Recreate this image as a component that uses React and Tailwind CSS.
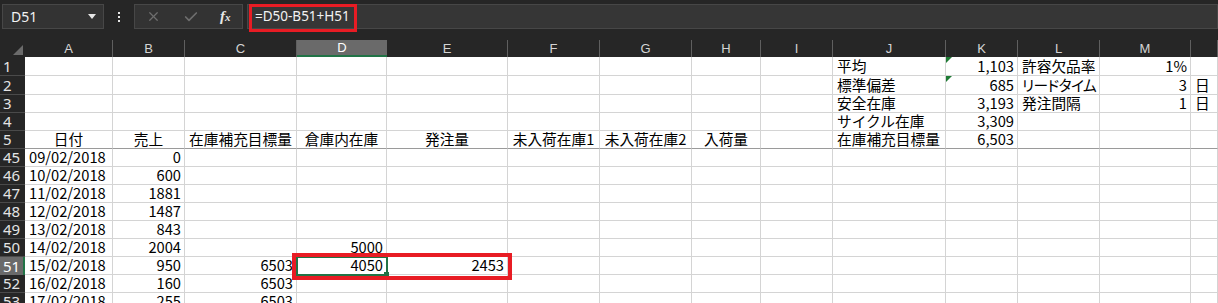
// Excel-style sheet view: formula bar on top, frozen header rows, and
// the inventory columns with the D51:E51 range highlighted in red.
import { X, Check } from "lucide-react";

const GRID =
  "grid grid-cols-[25px_88px_72px_112px_90px_121px_92px_92px_69px_72px_113px_72px_82px_91px_1fr]";

const LETTERS = ["A", "B", "C", "D", "E", "F", "G", "H", "I", "J", "K", "L", "M", ""];

// cells: column index -> [text, align]
const rows = [
  { n: "1", h: "h-[19px]", cells: { 9: ["平均", "l"], 10: ["1,103", "r"], 11: ["許容欠品率", "l"], 12: ["1%", "r"] }, flags: [10] },
  { n: "2", h: "h-[19px]", cells: { 9: ["標準偏差", "l"], 10: ["685", "r"], 11: ["リードタイム", "p"], 12: ["3", "r"], 13: ["日", "l"] }, flags: [10] },
  { n: "3", h: "h-[18px]", cells: { 9: ["安全在庫", "l"], 10: ["3,193", "r"], 11: ["発注間隔", "l"], 12: ["1", "r"], 13: ["日", "l"] } },
  { n: "4", h: "h-[18px]", cells: { 9: ["サイクル在庫", "l"], 10: ["3,309", "r"] } },
  {
    n: "5",
    h: "h-[18px]",
    freeze: true,
    cells: {
      0: ["日付", "c"],
      1: ["売上", "c"],
      2: ["在庫補充目標量", "c"],
      3: ["倉庫内在庫", "c"],
      4: ["発注量", "c"],
      5: ["未入荷在庫1", "c"],
      6: ["未入荷在庫2", "c"],
      7: ["入荷量", "c"],
      9: ["在庫補充目標量", "l"],
      10: ["6,503", "r"],
    },
  },
  { n: "45", h: "h-[18px]", cells: { 0: ["09/02/2018", "l"], 1: ["0", "r"] } },
  { n: "46", h: "h-[18px]", cells: { 0: ["10/02/2018", "l"], 1: ["600", "r"] } },
  { n: "47", h: "h-[18px]", cells: { 0: ["11/02/2018", "l"], 1: ["1881", "r"] } },
  { n: "48", h: "h-[18px]", cells: { 0: ["12/02/2018", "l"], 1: ["1487", "r"] } },
  { n: "49", h: "h-[18px]", cells: { 0: ["13/02/2018", "l"], 1: ["843", "r"] } },
  { n: "50", h: "h-[18px]", cells: { 0: ["14/02/2018", "l"], 1: ["2004", "r"], 3: ["5000", "r"] } },
  { n: "51", h: "h-[18px]", active: true, cells: { 0: ["15/02/2018", "l"], 1: ["950", "r"], 2: ["6503", "r"], 3: ["4050", "r"], 4: ["2453", "r"] } },
  { n: "52", h: "h-[18px]", cells: { 0: ["16/02/2018", "l"], 1: ["160", "r"], 2: ["6503", "r"] } },
  { n: "53", h: "h-[18px]", cells: { 0: ["17/02/2018", "l"], 1: ["255", "r"], 2: ["6503", "r"] } },
];

// "p" = left aligned with proportional kana, so リードタイム fits like in Excel
const alignClass = {
  l: "justify-start pl-[4px]",
  p: "justify-start pl-[4px] [font-feature-settings:'palt'] tracking-[-0.5px]",
  r: "justify-end pr-[3px]",
  c: "justify-center",
};

function Toolbar() {
  return (
    <div className="relative flex h-[40px] items-start bg-[#262626] pt-[4px]">
      <div className="ml-[2px] flex h-[25px] w-[102px] items-center justify-between border border-[#474747] bg-[#333333] pl-[8px] pr-[7px]">
        <span className="font-['Noto_Sans',sans-serif] text-[14px] text-[#f2f2f2]">D51</span>
        <svg width="8" height="5" viewBox="0 0 8 5">
          <polygon points="0,0 8,0 4,5" fill="#e6e6e6" />
        </svg>
      </div>
      <div className="flex h-[25px] w-[30px] flex-col items-center justify-center gap-[2px]">
        <span className="h-[2px] w-[2px] bg-[#e6e6e6]" />
        <span className="h-[2px] w-[2px] bg-[#e6e6e6]" />
        <span className="h-[2px] w-[2px] bg-[#e6e6e6]" />
      </div>
      <div className="flex h-[25px] w-[109px] items-center border border-[#474747] bg-[#333333]">
        <X size={15} strokeWidth={2} className="ml-[11px] text-[#6e6e6e]" />
        <Check size={16} strokeWidth={2.5} className="ml-[22px] text-[#6e6e6e]" />
        <span className="ml-[21px] font-['Liberation_Serif',serif] text-[15px] font-bold italic leading-none text-[#e8e8e8]">
          f<span className="text-[11px]">x</span>
        </span>
      </div>
      <div className="ml-[4px] flex h-[25px] flex-1 items-center border border-[#474747] bg-[#363636] pl-[7px]">
        <span className="font-['Noto_Sans',sans-serif] text-[13.5px] text-[#f2f2f2]">=D50-B51+H51</span>
      </div>
      <div className="pointer-events-none absolute left-[249px] top-[4px] h-[28px] w-[108px] border-[3px] border-[#e81c24]" />
    </div>
  );
}

function HeaderRow() {
  return (
    <div className={`${GRID} h-[17px] bg-[#262626]`}>
      <div className="flex items-end justify-end pb-[2px] pr-[2px]">
        <svg width="10" height="10" viewBox="0 0 10 10">
          <polygon points="10,0 10,10 0,10" fill="#6b6b6b" />
        </svg>
      </div>
      {LETTERS.map((l, i) =>
        i === 3 ? (
          <div
            key={i}
            className="flex items-center justify-center border-b-2 border-b-[#217346] bg-[#6a6a6a] font-['Liberation_Sans',sans-serif] text-[13px] leading-none text-white"
          >
            {l}
          </div>
        ) : (
          <div
            key={i}
            className="flex items-center justify-center border-r border-[#5f5f5f] font-['Liberation_Sans',sans-serif] text-[13px] leading-none text-[#d4d4d4]"
          >
            {l}
          </div>
        )
      )}
    </div>
  );
}

function Row({ row }) {
  const lineColor = row.freeze ? "border-b-[#9a9a9a]" : "border-b-[#d4d4d4]";
  return (
    <div className={`${GRID} ${row.h}`}>
      <div
        className={`flex items-center pl-[3px] font-['Noto_Sans',sans-serif] text-[15px] leading-none ${
          row.active
            ? "border-r-2 border-r-[#217346] bg-[#6a6a6a] text-white"
            : "border-b border-b-[#4a4a4a] bg-[#262626] text-[#e4e4e4]"
        }`}
      >
        {row.n}
      </div>
      {LETTERS.map((_, i) => {
        const cell = row.cells[i];
        const flagged = row.flags && row.flags.includes(i);
        return (
          <div
            key={i}
            className={`relative flex items-end whitespace-nowrap border-b border-r border-r-[#d4d4d4] bg-white pb-[1px] font-['Noto_Sans_CJK_JP',sans-serif] text-[14.7px] leading-[16px] text-black ${lineColor} ${
              cell ? alignClass[cell[1]] : ""
            }`}
          >
            {flagged && (
              <svg width="6" height="6" viewBox="0 0 6 6" className="absolute left-0 top-0">
                <polygon points="0,0 6,0 0,6" fill="#1e7b34" />
              </svg>
            )}
            {cell ? cell[0] : null}
          </div>
        );
      })}
    </div>
  );
}

export default function App() {
  return (
    <div className="relative h-[303px] w-[1218px] overflow-hidden bg-white">
      <Toolbar />
      <HeaderRow />
      {rows.map((row) => (
        <Row key={row.n} row={row} />
      ))}
      {/* active cell D51 */}
      <div className="pointer-events-none absolute left-[296px] top-[256px] h-[20px] w-[92px] border-2 border-[#217346]" />
      <div className="pointer-events-none absolute left-[384px] top-[272px] h-[5px] w-[5px] bg-[#217346]" />
      {/* red range callout */}
      <div className="pointer-events-none absolute left-[292px] top-[253px] h-[27px] w-[220px] border-4 border-[#e81c24]" />
    </div>
  );
}
